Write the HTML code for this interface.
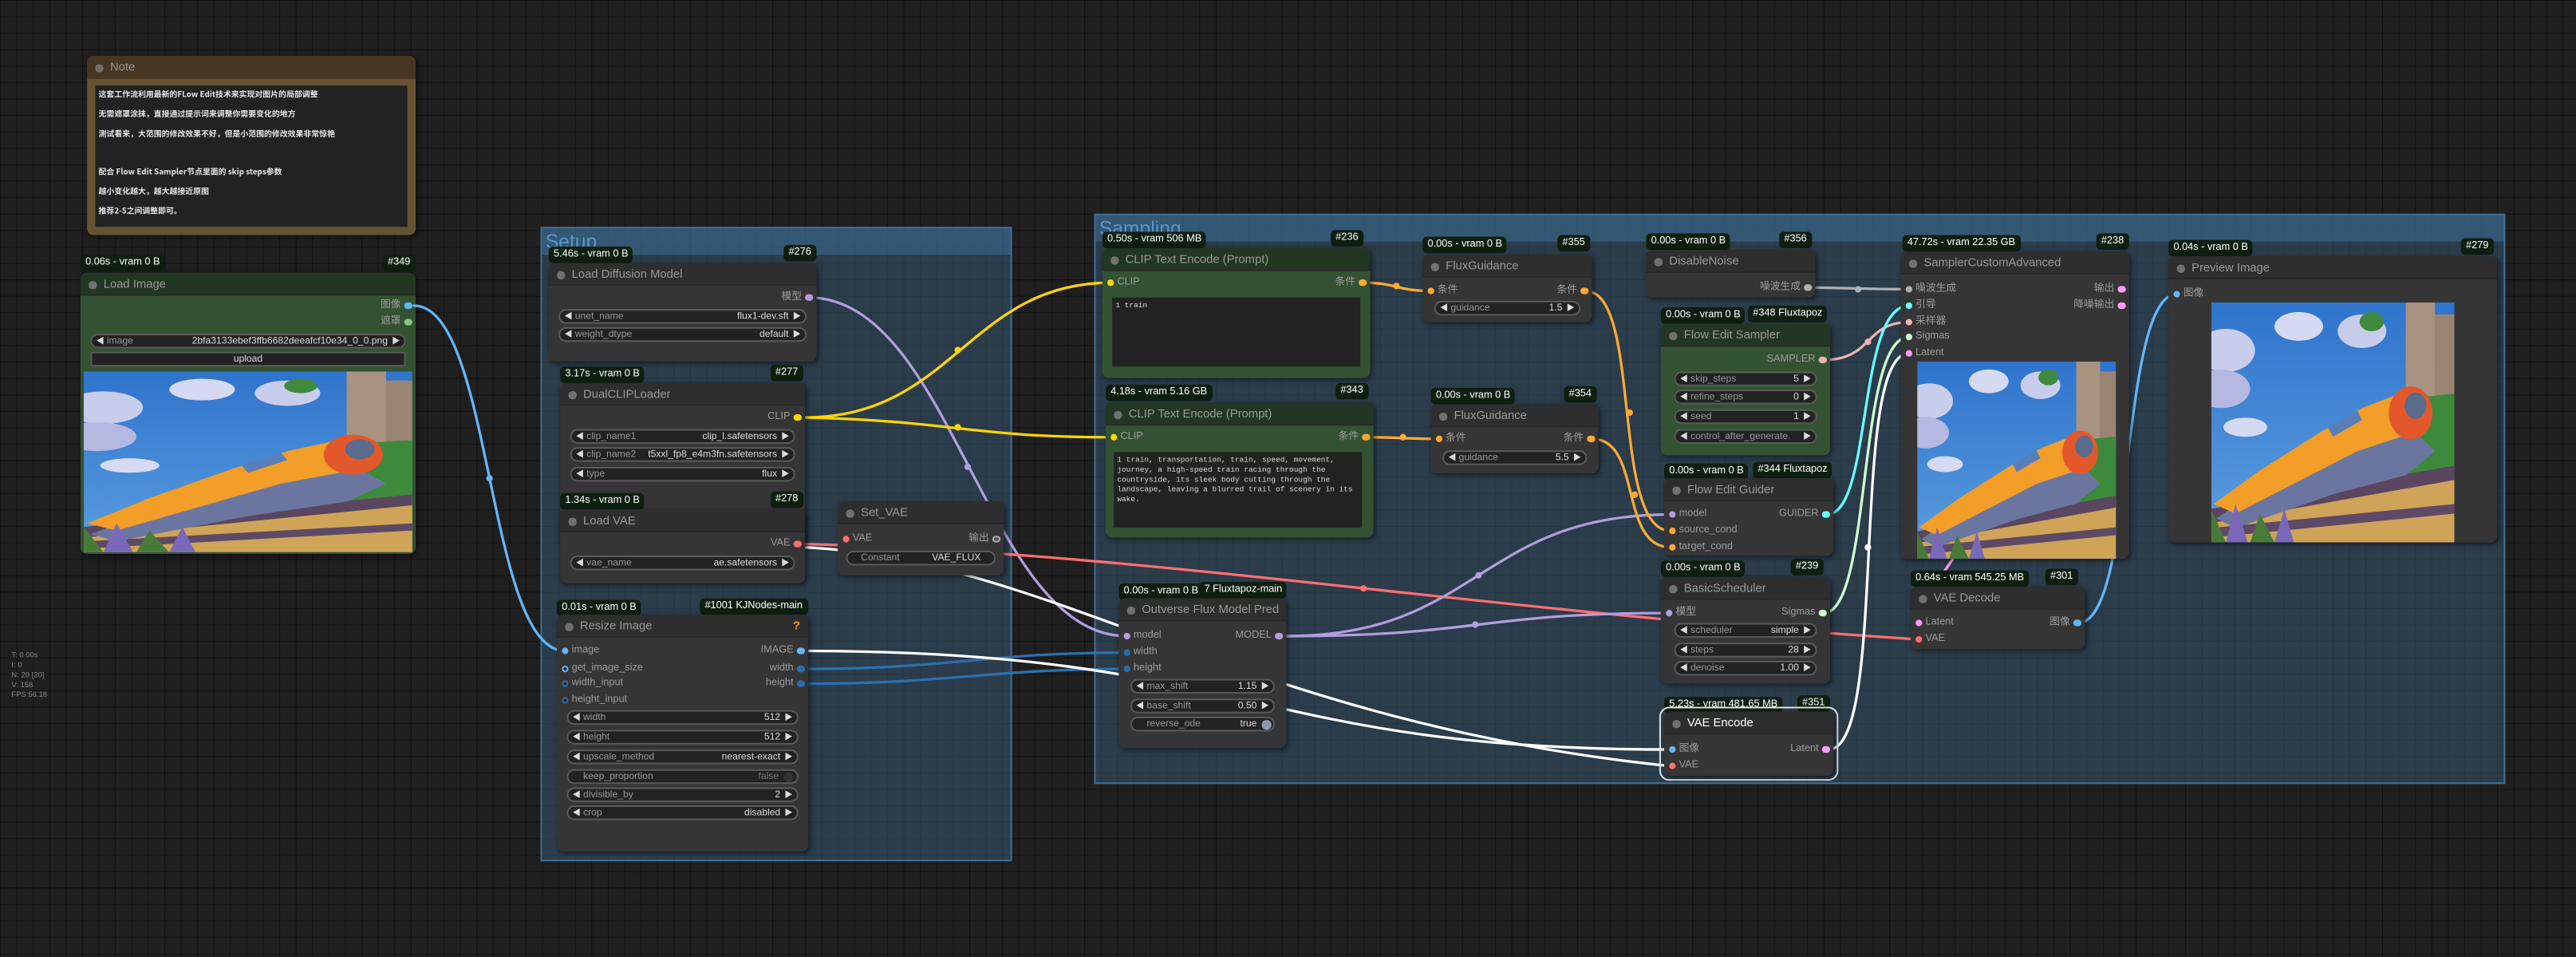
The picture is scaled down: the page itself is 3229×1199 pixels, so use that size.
<!DOCTYPE html>
<html><head><meta charset="utf-8"><style>
*{box-sizing:border-box;margin:0;padding:0}
html,body{width:3229px;height:1198px;overflow:hidden;background:#1d1d1d}
#root{position:absolute;left:0;top:0;width:1568px;height:582px;transform:scale(2.0593);transform-origin:0 0;font-family:"Liberation Sans","Noto Sans CJK SC",sans-serif;
background-color:#1f1f1f;background-image:linear-gradient(rgba(0,0,0,.4) 0.5px,transparent 0.5px),linear-gradient(90deg,rgba(0,0,0,.4) 0.5px,transparent 0.5px);background-size:10px 10px}
.g{position:absolute;background:rgba(52,84,112,.55);border:0.6px solid #3f6f98}
.g .gh{height:16px;background:rgba(60,110,150,.55);color:#5b95c8;font-size:12px;line-height:16px;padding-left:2px;overflow:hidden}
.n{position:absolute;background:#353535;border-radius:4px;box-shadow:1px 1px 3px rgba(0,0,0,.5)}
.n.gr{background:#335233}
.h{height:14px;background:#2e2e2e;border-radius:4px 4px 0 0;color:#999;font-size:7.2px;line-height:14px;padding-left:14px;position:relative;border-bottom:0.5px solid #282828;white-space:nowrap}
.gr .h{background:#233623}
.h i{position:absolute;left:5px;top:5px;width:4.5px;height:4.5px;border-radius:50%;background:#707070}
.b{position:absolute;height:10px;background:#0e1f10;color:#fff;font-size:6.2px;line-height:10px;padding:0 3px;border-radius:2.5px;white-space:nowrap}
.s{position:absolute;font-size:6.2px;color:#9c9c9c;height:8px;line-height:8px;white-space:nowrap}
.s.i{left:9px}.s.o{right:9px;text-align:right}
.d{position:absolute;width:4.2px;height:4.2px;border-radius:50%;top:1.9px}
.i .d{left:-6.5px}.o .d{right:-6.5px}
.w{position:absolute;left:6px;right:6px;height:9px;border-radius:5px;background:#222;border:0.6px solid #595959;font-size:5.9px;line-height:8px;color:#999;white-space:nowrap}
.w .l{position:absolute;left:9px}.w .v{position:absolute;right:10px;color:#ddd}
.w:before{content:"◀";position:absolute;left:2.5px;font-size:5px;color:#ddd}
.w:after{content:"▶";position:absolute;right:2.5px;font-size:5px;color:#ddd}
.w.t:before,.w.t:after{content:""}
.ta{position:absolute;background:#222;color:#ddd;font-family:"Liberation Mono","Noto Sans CJK SC",monospace;font-size:4.6px;line-height:6px;padding:3px 2px}
svg.lk{position:absolute;left:0;top:0}
</style></head><body><div id="root">
<svg width="0" height="0" style="position:absolute"><defs>
<linearGradient id="sky" x1="0" y1="0" x2="0" y2="1"><stop offset="0" stop-color="#2f74cc"/><stop offset="1" stop-color="#5b9ee0"/></linearGradient>
<symbol id="train" viewBox="0 0 100 100" preserveAspectRatio="none">
<rect width="100" height="100" fill="url(#sky)"/>
<ellipse cx="6" cy="20" rx="12" ry="9" fill="#c9cdec"/><ellipse cx="4" cy="36" rx="12" ry="8" fill="#b5b8e0"/>
<ellipse cx="36" cy="10" rx="10" ry="6" fill="#d6d9f2"/><ellipse cx="62" cy="12" rx="10" ry="7" fill="#c9cdec"/>
<ellipse cx="14" cy="52" rx="9" ry="4" fill="#d6d9f2"/>
<rect x="80" y="0" width="12" height="40" fill="#a89280"/><rect x="92" y="5" width="8" height="40" fill="#9a8472"/>
<ellipse cx="66" cy="8" rx="5" ry="4" fill="#3f8a3e"/>
<polygon points="72,55 80,40 100,38 100,72 80,72" fill="#3e8a3c"/>
<polygon points="0,88 100,70 100,100 0,100" fill="#cfa458"/>
<polygon points="0,86 100,68 100,74 0,92" fill="#5a4660"/>
<polygon points="0,94 100,84 100,88 0,98" fill="#5e4a66"/>
<polygon points="2,90 20,78 60,58 82,52 92,62 80,72 50,80 10,94" fill="#6b76a0"/>
<polygon points="1,84 20,70 45,54 62,44 80,37 90,44 84,54 60,62 10,88" fill="#f29e28"/>
<ellipse cx="82" cy="46" rx="9" ry="11" fill="#e2582a"/><ellipse cx="84" cy="43" rx="4.5" ry="5.5" fill="#5b6b8c"/>
<polygon points="48,52 60,45 62,49 50,56" fill="#5a7fb8"/>
<polygon points="0,100 0,86 6,100" fill="#4a7a3a"/><polygon points="6,100 10,84 15,100" fill="#7a68b8"/><polygon points="16,100 20,88 26,100" fill="#4a7a3a"/><polygon points="26,100 30,86 34,100" fill="#7a68b8"/>
</symbol>
</defs></svg>

<div style="position:absolute;left:7px;top:396px;color:#8a8a8a;font-size:4.6px;line-height:6.1px">T: 0.00s<br>I: 0<br>N: 20 [20]<br>V: 158<br>FPS:56.18</div>

<div class="g" style="left:329px;top:138px;width:287px;height:386px"><div class="gh">Setup</div></div>
<div class="g" style="left:666px;top:130px;width:859px;height:347px"><div class="gh">Sampling</div></div>

<div class="n" style="left:53px;top:34px;width:200px;height:109px;background:#665331">
<div class="h" style="background:#473522;border-bottom:none"><i></i>Note</div>
<div class="ta" style="left:5px;top:18px;width:190px;height:86px;font-family:'Noto Sans CJK SC',sans-serif;font-size:4.8px;line-height:11.8px;padding:0 2px;color:#e6e6e6;font-weight:bold">这套工作流利用最新的FLow Edit技术来实现对图片的局部调整<br>无需遮罩涂抹，直接通过提示词来调整你需要变化的地方<br>测试看来，大范围的修改效果不好，但是小范围的修改效果非常惊艳<br><span style="line-height:9px">&nbsp;</span><br>配合 Flow Edit Sampler节点里面的 skip steps参数<br>越小变化越大，越大越接近原图<br>推荐2-5之间调整即可。</div>
</div>

<div class="b" style="left:49px;top:155px">0.06s - vram 0 B</div><div class="b" style="left:233px;top:155px">#349</div>
<div class="n gr" style="left:49px;top:166px;width:204px;height:171px">
<div class="h"><i></i>Load Image</div>
<div class="s o" style="top:16px">图像<b class="d" style="background:#64b5f6"></b></div>
<div class="s o" style="top:26px">遮罩<b class="d" style="background:#81c784"></b></div>
<div class="w" style="top:36.5px"><span class="l">image</span><span class="v">2bfa3133ebef3ffb6682deeafcf10e34_0_0.png</span></div>
<div class="w t" style="top:47.5px;border-radius:1px;text-align:center;color:#ddd">upload</div>
<svg style="position:absolute;left:2px;top:60px" width="200" height="110"><use href="#train" width="200" height="110"/></svg>
</div>

<svg class="lk" width="1568" height="582" fill="none" stroke-linecap="round">
<g stroke-width="1.6">
<path d="M252,186 C300,186 296,396 344,396" stroke="#64b5f6"/>
<path d="M492,181 C580,181 600,387 686,387" stroke="#b39ddb"/>
<path d="M490,254 C580,254 590,172 676,172" stroke="#ffd500"/>
<path d="M490,254 C580,256 590,266 677,266" stroke="#ffd500"/>
<path d="M490,331 C700,336 900,372 1168,389" stroke="#ff6e6e"/>
<path d="M488,407 C580,407 600,397 686,397" stroke="#2a6fae"/>
<path d="M488,416 C580,416 600,407 686,407" stroke="#2a6fae"/>
<path d="M783,387 C900,387 900,313 1017,313" stroke="#b39ddb"/>
<path d="M783,387 C900,387 900,373 1015,373" stroke="#b39ddb"/>
<path d="M830,172 C850,172 850,177 871,177" stroke="#ffa931"/>
<path d="M831,266 C850,266 855,267 876,267" stroke="#ffa931"/>
<path d="M965,177 C1000,177 980,323 1017,323" stroke="#ffa931"/>
<path d="M969,267 C1000,267 985,333 1017,333" stroke="#ffa931"/>
<path d="M1101,175 C1130,175 1130,176 1162,176" stroke="#b0b0b0"/>
<path d="M1110,219 C1140,219 1135,196 1162,196" stroke="#ecb4b4"/>
<path d="M1112,313 C1140,313 1130,186 1162,186" stroke="#66ffff"/>
<path d="M1110,373 C1140,373 1130,205 1162,205" stroke="#cdffcd"/>
<path d="M1292,176 C1320,176 1150,379 1168,379" stroke="#ff9cf9"/>
<path d="M1265,379 C1300,379 1290,179 1325,179" stroke="#64b5f6"/>
</g>
<g stroke="#fff" stroke-width="1.6">
<path d="M488,396 C760,396 760,456 1016,456"/>
<path d="M490,333 C640,340 760,440 1016,466"/>
<path d="M1113,456 C1150,456 1125,215 1162,215"/>
</g>
<g>
<circle cx="298" cy="291" r="2" fill="#64b5f6"/><circle cx="589" cy="284" r="2" fill="#b39ddb"/>
<circle cx="583" cy="213" r="2" fill="#ffd500"/><circle cx="583" cy="260" r="2" fill="#ffd500"/>
<circle cx="850" cy="174" r="2" fill="#ffa931"/><circle cx="854" cy="266" r="2" fill="#ffa931"/>
<circle cx="900" cy="350" r="2" fill="#b39ddb"/><circle cx="898" cy="380" r="2" fill="#b39ddb"/>
<circle cx="830" cy="358" r="2" fill="#ff6e6e"/><circle cx="1137" cy="208" r="2" fill="#ecb4b4"/>
<circle cx="1131" cy="176" r="2" fill="#b0b0b0"/><circle cx="1137" cy="333" r="2" fill="#fff"/>
<circle cx="992" cy="251" r="2" fill="#ffa931"/><circle cx="995" cy="301" r="2" fill="#ffa931"/>
</g>
</svg>

<div class="b" style="left:334px;top:150px">5.46s - vram 0 B</div><div class="b" style="left:477px;top:149px">#276</div>
<div class="n" style="left:334px;top:160px;width:163px;height:60px">
<div class="h"><i></i>Load Diffusion Model</div>
<div class="s o" style="top:17px">模型<b class="d" style="background:#b39ddb"></b></div>
<div class="w" style="top:27.5px"><span class="l">unet_name</span><span class="v">flux1-dev.sft</span></div>
<div class="w" style="top:38.5px"><span class="l">weight_dtype</span><span class="v">default</span></div>
</div>

<div class="b" style="left:341px;top:223px">3.17s - vram 0 B</div><div class="b" style="left:469px;top:222px">#277</div>
<div class="n" style="left:341px;top:233px;width:149px;height:101px">
<div class="h"><i></i>DualCLIPLoader</div>
<div class="s o" style="top:17px">CLIP<b class="d" style="background:#ffd500"></b></div>
<div class="w" style="top:27.5px"><span class="l">clip_name1</span><span class="v">clip_l.safetensors</span></div>
<div class="w" style="top:39px"><span class="l">clip_name2</span><span class="v">t5xxl_fp8_e4m3fn.safetensors</span></div>
<div class="w" style="top:50.5px"><span class="l">type</span><span class="v">flux</span></div>
</div>

<div class="b" style="left:341px;top:300px">1.34s - vram 0 B</div><div class="b" style="left:469px;top:299px">#278</div>
<div class="n" style="left:341px;top:310px;width:149px;height:45px">
<div class="h"><i></i>Load VAE</div>
<div class="s o" style="top:17px">VAE<b class="d" style="background:#ff6e6e"></b></div>
<div class="w" style="top:27.5px"><span class="l">vae_name</span><span class="v">ae.safetensors</span></div>
</div>

<div class="n" style="left:510px;top:305px;width:101px;height:45px">
<div class="h"><i></i>Set_VAE</div>
<div class="s i" style="top:19px">VAE<b class="d" style="background:#ff6e6e"></b></div>
<div class="s o" style="top:19px">输出<b class="d" style="background:#555;border:0.5px solid #aaa"></b></div>
<div class="w t" style="top:29.5px;left:5px;right:5px"><span class="l" style="left:8px">Constant</span><span class="v" style="right:8px">VAE_FLUX</span></div>
</div>

<div class="b" style="left:339px;top:365px">0.01s - vram 0 B</div><div class="b" style="left:426px;top:364px">#1001 KJNodes-main</div>
<div class="n" style="left:339px;top:374px;width:153px;height:144px">
<div class="h"><i></i>Resize Image<span style="position:absolute;right:5px;color:#f0a020;font-weight:bold">?</span></div>
<div class="s i" style="top:18px">image<b class="d" style="background:#64b5f6"></b></div>
<div class="s i" style="top:29px">get_image_size<b class="d" style="background:#222;border:1px solid #64b5f6"></b></div>
<div class="s i" style="top:38px">width_input<b class="d" style="background:#222;border:1px solid #2a6fae"></b></div>
<div class="s i" style="top:48px">height_input<b class="d" style="background:#222;border:1px solid #2a6fae"></b></div>
<div class="s o" style="top:18px">IMAGE<b class="d" style="background:#64b5f6"></b></div>
<div class="s o" style="top:29px">width<b class="d" style="background:#2a6fae"></b></div>
<div class="s o" style="top:38px">height<b class="d" style="background:#2a6fae"></b></div>
<div class="w" style="top:57.5px"><span class="l">width</span><span class="v">512</span></div>
<div class="w" style="top:69.5px"><span class="l">height</span><span class="v">512</span></div>
<div class="w" style="top:81.5px"><span class="l">upscale_method</span><span class="v">nearest-exact</span></div>
<div class="w t" style="top:93.5px"><span class="l">keep_proportion</span><span class="v" style="color:#777;right:11px">false</span><b style="position:absolute;right:2px;top:1px;width:6px;height:6px;border-radius:50%;background:#333"></b></div>
<div class="w" style="top:104.5px"><span class="l">divisible_by</span><span class="v">2</span></div>
<div class="w" style="top:115.5px"><span class="l">crop</span><span class="v">disabled</span></div>
</div>

<div class="b" style="left:671px;top:141px">0.50s - vram 506 MB</div><div class="b" style="left:810px;top:140px">#236</div>
<div class="n gr" style="left:671px;top:151px;width:163px;height:79px">
<div class="h"><i></i>CLIP Text Encode (Prompt)</div>
<div class="s i" style="top:17px">CLIP<b class="d" style="background:#ffd500"></b></div>
<div class="s o" style="top:17px">条件<b class="d" style="background:#ffa931"></b></div>
<div class="ta" style="left:6px;top:30px;width:151px;height:42px">1 train</div>
</div>

<div class="b" style="left:673px;top:234px">4.18s - vram 5.16 GB</div><div class="b" style="left:813px;top:233px">#343</div>
<div class="n gr" style="left:673px;top:245px;width:163px;height:82px">
<div class="h"><i></i>CLIP Text Encode (Prompt)</div>
<div class="s i" style="top:17px">CLIP<b class="d" style="background:#ffd500"></b></div>
<div class="s o" style="top:17px">条件<b class="d" style="background:#ffa931"></b></div>
<div class="ta" style="left:5px;top:30px;width:151px;height:46px">1 train, transportation, train, speed, movement, journey, a high-speed train racing through the countryside, its sleek body cutting through the landscape, leaving a blurred trail of scenery in its wake.</div>
</div>

<div class="b" style="left:866px;top:144px">0.00s - vram 0 B</div><div class="b" style="left:948px;top:143px">#355</div>
<div class="n" style="left:866px;top:155px;width:103px;height:41px">
<div class="h"><i></i>FluxGuidance</div>
<div class="s i" style="top:18px">条件<b class="d" style="background:#ffa931"></b></div>
<div class="s o" style="top:18px">条件<b class="d" style="background:#ffa931"></b></div>
<div class="w" style="top:27.5px;left:7px;right:7px"><span class="l">guidance</span><span class="v">1.5</span></div>
</div>

<div class="b" style="left:871px;top:236px">0.00s - vram 0 B</div><div class="b" style="left:952px;top:235px">#354</div>
<div class="n" style="left:871px;top:246px;width:102px;height:42px">
<div class="h"><i></i>FluxGuidance</div>
<div class="s i" style="top:17px">条件<b class="d" style="background:#ffa931"></b></div>
<div class="s o" style="top:17px">条件<b class="d" style="background:#ffa931"></b></div>
<div class="w" style="top:27.5px;left:7px;right:7px"><span class="l">guidance</span><span class="v">5.5</span></div>
</div>

<div class="b" style="left:1002px;top:142px">0.00s - vram 0 B</div><div class="b" style="left:1083px;top:141px">#356</div>
<div class="n" style="left:1002px;top:152px;width:103px;height:29px">
<div class="h"><i></i>DisableNoise</div>
<div class="s o" style="top:19px">噪波生成<b class="d" style="background:#b0b0b0"></b></div>
</div>

<div class="b" style="left:1011px;top:187px">0.00s - vram 0 B</div><div class="b" style="left:1064px;top:186px">#348 Fluxtapoz</div>
<div class="n gr" style="left:1011px;top:197px;width:103px;height:80px">
<div class="h"><i></i>Flow Edit Sampler</div>
<div class="s o" style="top:18px">SAMPLER<b class="d" style="background:#ecb4b4"></b></div>
<div class="w" style="top:28.5px;left:8px;right:8px"><span class="l">skip_steps</span><span class="v">5</span></div>
<div class="w" style="top:39.5px;left:8px;right:8px"><span class="l">refine_steps</span><span class="v">0</span></div>
<div class="w" style="top:51.5px;left:8px;right:8px"><span class="l">seed</span><span class="v">1</span></div>
<div class="w" style="top:63.5px;left:8px;right:8px"><span class="l">control_after_generate.</span><span class="v"></span></div>
</div>

<div class="b" style="left:1013px;top:282px">0.00s - vram 0 B</div><div class="b" style="left:1067px;top:281px">#344 Fluxtapoz</div>
<div class="n" style="left:1013px;top:291px;width:103px;height:47px">
<div class="h"><i></i>Flow Edit Guider</div>
<div class="s i" style="top:18px">model<b class="d" style="background:#b39ddb"></b></div>
<div class="s i" style="top:28px">source_cond<b class="d" style="background:#ffa931"></b></div>
<div class="s i" style="top:38px">target_cond<b class="d" style="background:#ffa931"></b></div>
<div class="s o" style="top:18px">GUIDER<b class="d" style="background:#66ffff"></b></div>
</div>

<div class="b" style="left:1011px;top:341px">0.00s - vram 0 B</div><div class="b" style="left:1090px;top:340px">#239</div>
<div class="n" style="left:1011px;top:351px;width:103px;height:65px">
<div class="h"><i></i>BasicScheduler</div>
<div class="s i" style="top:18px">模型<b class="d" style="background:#b39ddb"></b></div>
<div class="s o" style="top:18px">Sigmas<b class="d" style="background:#cdffcd"></b></div>
<div class="w" style="top:27.5px;left:8px;right:8px"><span class="l">scheduler</span><span class="v">simple</span></div>
<div class="w" style="top:39.5px;left:8px;right:8px"><span class="l">steps</span><span class="v">28</span></div>
<div class="w" style="top:50.5px;left:8px;right:8px"><span class="l">denoise</span><span class="v">1.00</span></div>
</div>

<div class="b" style="left:1013px;top:424px">5.23s - vram 481.65 MB</div><div class="b" style="left:1094px;top:423px">#351</div>
<div style="position:absolute;left:1010px;top:430px;width:109px;height:45px;border:0.8px solid #ddd;border-radius:6px"></div>
<div class="n" style="left:1013px;top:433px;width:103px;height:39px">
<div class="h" style="color:#fff"><i></i>VAE Encode</div>
<div class="s i" style="top:19px">图像<b class="d" style="background:#64b5f6"></b></div>
<div class="s i" style="top:29px">VAE<b class="d" style="background:#ff6e6e"></b></div>
<div class="s o" style="top:19px">Latent<b class="d" style="background:#ff9cf9"></b></div>
</div>

<div class="b" style="left:681px;top:355px">0.00s - vram 0 B</div><div class="b" style="left:730px;top:354px">7 Fluxtapoz-main</div>
<div class="n" style="left:681px;top:364px;width:102px;height:91px">
<div class="h"><i></i>Outverse Flux Model Pred</div>
<div class="s i" style="top:19px">model<b class="d" style="background:#b39ddb"></b></div>
<div class="s i" style="top:29px">width<b class="d" style="background:#2a6fae"></b></div>
<div class="s i" style="top:39px">height<b class="d" style="background:#2a6fae"></b></div>
<div class="s o" style="top:19px">MODEL<b class="d" style="background:#b39ddb"></b></div>
<div class="w" style="top:48.5px;left:7px;right:7px"><span class="l">max_shift</span><span class="v">1.15</span></div>
<div class="w" style="top:60.5px;left:7px;right:7px"><span class="l">base_shift</span><span class="v">0.50</span></div>
<div class="w t" style="top:71.5px;left:7px;right:7px"><span class="l">reverse_ode</span><span class="v" style="right:10px">true</span><b style="position:absolute;right:1.5px;top:1px;width:6px;height:6px;border-radius:50%;background:#8a9bb0"></b></div>
</div>

<div class="b" style="left:1158px;top:143px">47.72s - vram 22.35 GB</div><div class="b" style="left:1276px;top:142px">#238</div>
<div class="n" style="left:1157px;top:153px;width:139px;height:187px">
<div class="h"><i></i>SamplerCustomAdvanced</div>
<div class="s i" style="top:19px">噪波生成<b class="d" style="background:#b0b0b0"></b></div>
<div class="s i" style="top:29px">引导<b class="d" style="background:#66ffff"></b></div>
<div class="s i" style="top:39px">采样器<b class="d" style="background:#ecb4b4"></b></div>
<div class="s i" style="top:48px">Sigmas<b class="d" style="background:#cdffcd"></b></div>
<div class="s i" style="top:58px">Latent<b class="d" style="background:#ff9cf9"></b></div>
<div class="s o" style="top:19px">输出<b class="d" style="background:#ff9cf9"></b></div>
<div class="s o" style="top:29px">降噪输出<b class="d" style="background:#ff9cf9"></b></div>
<svg style="position:absolute;left:10px;top:67px" width="121" height="120"><use href="#train" width="121" height="120"/></svg>
</div>

<div class="b" style="left:1163px;top:347px">0.64s - vram 545.25 MB</div><div class="b" style="left:1245px;top:346px">#301</div>
<div class="n" style="left:1163px;top:357px;width:106px;height:38px">
<div class="h"><i></i>VAE Decode</div>
<div class="s i" style="top:18px">Latent<b class="d" style="background:#ff9cf9"></b></div>
<div class="s i" style="top:28px">VAE<b class="d" style="background:#ff6e6e"></b></div>
<div class="s o" style="top:18px">图像<b class="d" style="background:#64b5f6"></b></div>
</div>

<div class="b" style="left:1320px;top:146px">0.04s - vram 0 B</div><div class="b" style="left:1498px;top:145px">#279</div>
<div class="n" style="left:1320px;top:156px;width:200px;height:174px">
<div class="h"><i></i>Preview Image</div>
<div class="s i" style="top:19px">图像<b class="d" style="background:#64b5f6"></b></div>
<svg style="position:absolute;left:26px;top:28px" width="148" height="146"><use href="#train" width="148" height="146"/></svg>
</div>

</div></body></html>
